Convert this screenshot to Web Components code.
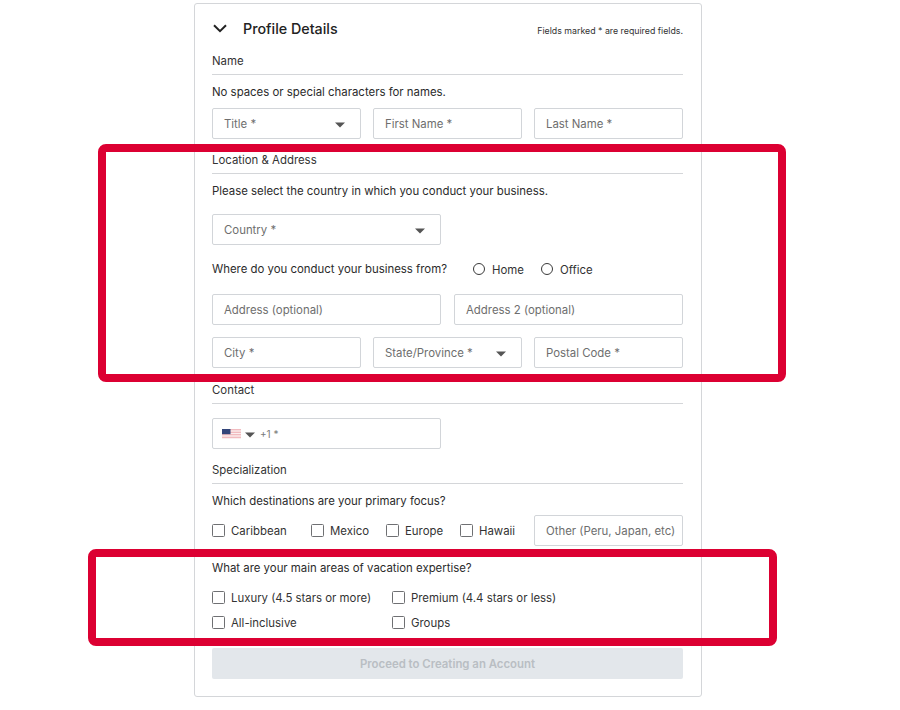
<!DOCTYPE html>
<html lang="en">
<head>
<meta charset="utf-8">
<title>Profile Details</title>
<style>
  body { margin: 0; background: #fff; font-family: "Inter", "Liberation Sans", sans-serif; color: #333; }
</style>
</head>
<body>
<profile-form></profile-form>
<highlight-box style="left:98px;top:144px;width:688px;height:238px"></highlight-box>
<highlight-box style="left:88px;top:549px;width:689px;height:97px"></highlight-box>

<script>
const CARET = `<svg width="10" height="6" viewBox="0 0 10 6"><path d="M0 0.5h10L5 5.5z" fill="#555"/></svg>`;

class SectionHead extends HTMLElement {
  constructor() {
    super();
    this.attachShadow({ mode: "open" }).innerHTML = `
      <style>
        :host { display: block; height: 22px; border-bottom: 1px solid #d4d6d9; font-size: 11.4px; line-height: 19px; color: #333; }
      </style>
      <slot></slot>`;
  }
}

class FormText extends HTMLElement {
  constructor() {
    super();
    this.attachShadow({ mode: "open" }).innerHTML = `
      <style>
        :host { display: block; height: 18px; font-size: 11.4px; line-height: 19px; color: #2b2b2b; white-space: nowrap; }
      </style>
      <slot></slot>`;
  }
}

class TextField extends HTMLElement {
  constructor() {
    super();
    this.attachShadow({ mode: "open" }).innerHTML = `
      <style>
        :host { display: flex; align-items: center; justify-content: space-between; box-sizing: border-box; height: 31px; padding: 1px 11px 0; border: 1px solid #d2d5d9; border-radius: 2px; background: #fff; font-size: 11.4px; color: #6e6e6e; white-space: nowrap; }
      </style>
      <slot></slot>`;
  }
}

class SelectField extends HTMLElement {
  constructor() {
    super();
    this.attachShadow({ mode: "open" }).innerHTML = `
      <style>
        :host { display: flex; align-items: center; justify-content: space-between; box-sizing: border-box; height: 31px; padding: 1px 15px 0 11px; border: 1px solid #d2d5d9; border-radius: 2px; background: #fff; font-size: 11.4px; color: #6e6e6e; white-space: nowrap; }
        svg { display: block; margin-top: 1px; }
      </style>
      <slot></slot>${CARET}`;
  }
}

class PhoneField extends HTMLElement {
  constructor() {
    super();
    this.attachShadow({ mode: "open" }).innerHTML = `
      <style>
        :host { display: flex; align-items: center; box-sizing: border-box; height: 31px; padding: 0 9px; border: 1px solid #d2d5d9; border-radius: 2px; font-size: 10px; color: #7a7a7a; }
        .flag { display: block; margin-right: 4px; }
        .caret { display: block; margin-right: 5px; margin-top: 1px; }
      </style>
      <svg class="flag" width="19" height="10" viewBox="0 0 19 10">
        <rect width="19" height="10" fill="#fbeeee"/>
        <path d="M0 .75h19M0 3.25h19M0 5.75h19M0 8.25h19" stroke="#eeaab0" stroke-width="1.2"/>
        <rect width="8.5" height="5.2" fill="#34467a"/>
      </svg>
      <span class="caret">${CARET}</span>
      <slot></slot>`;
  }
}

class CheckOption extends HTMLElement {
  constructor() {
    super();
    this.attachShadow({ mode: "open" }).innerHTML = `
      <style>
        :host { display: flex; align-items: center; gap: 6px; height: 18px; font-size: 11.4px; color: #333; white-space: nowrap; }
        i { flex: none; box-sizing: border-box; width: 13px; height: 13px; border: 1px solid #6f7073; border-radius: 1.5px; }
        span { padding-top: 1px; }
      </style>
      <i></i><span><slot></slot></span>`;
  }
}

class RadioOption extends HTMLElement {
  constructor() {
    super();
    this.attachShadow({ mode: "open" }).innerHTML = `
      <style>
        :host { display: flex; align-items: center; gap: 7px; height: 18px; font-size: 11.4px; color: #333; white-space: nowrap; }
        i { flex: none; box-sizing: border-box; width: 12px; height: 12px; border: 1.4px solid #3a3a3a; border-radius: 50%; }
        span { padding-top: 1px; }
      </style>
      <i></i><span><slot></slot></span>`;
  }
}

class ProceedButton extends HTMLElement {
  constructor() {
    super();
    this.attachShadow({ mode: "open" }).innerHTML = `
      <style>
        :host { display: flex; align-items: center; justify-content: center; height: 31px; border-radius: 2px; background: #e3e7eb; color: #b9bec3; font-size: 11.4px; font-weight: 600; }
      </style>
      <slot></slot>`;
  }
}

// the red annotation frames lie over the form
class HighlightBox extends HTMLElement {
  constructor() {
    super();
    this.attachShadow({ mode: "open" }).innerHTML = `
      <style>
        :host { position: absolute; display: block; box-sizing: border-box; border: 8px solid #dc0032; border-radius: 8px; pointer-events: none; }
      </style>`;
  }
}

class ProfileForm extends HTMLElement {
  constructor() {
    super();
    this.attachShadow({ mode: "open" }).innerHTML = `
      <style>
        :host { display: block; box-sizing: border-box; width: 508px; margin: 3px 0 0 194px; padding: 13px 18px 17px 17px; border: 1px solid #d4d6d9; border-radius: 3px; background: #fff; font-family: "Inter", "Liberation Sans", sans-serif; }
        header { display: flex; align-items: center; height: 23px; margin-bottom: 12px; }
        header svg { display: block; margin-right: 16px; margin-left: 1px; }
        h1 { margin: 0; font-size: 14.3px; font-weight: 500; color: #222; }
        small { margin-left: auto; margin-top: 4px; font-size: 8.8px; color: #333; white-space: nowrap; }
        .row { display: grid; gap: 12px; }
        .three { grid-template-columns: repeat(3, 149px); }
        .two { grid-template-columns: repeat(2, 229px); gap: 13px; }
        .half { width: 229px; }
        .where { display: flex; align-items: center; }
        .where form-text { width: 261px; }
        .where radio-option { width: 68px; }
        .dest { display: grid; grid-template-columns: 99px 75px 74px 74px 149px; align-items: center; }
        .areas { display: grid; grid-template-columns: 180px 1fr; row-gap: 7px; }
      </style>
      <header>
        <svg width="14" height="9" viewBox="0 0 14 9"><path d="M1 1.2l6 6 6-6" fill="none" stroke="#222" stroke-width="2"/></svg>
        <h1>Profile Details</h1>
        <small>Fields marked * are required fields.</small>
      </header>

      <section-head>Name</section-head>
      <form-text style="margin-top:8px">No spaces or special characters for names.</form-text>
      <div class="row three" style="margin-top:7px">
        <select-field>Title *</select-field>
        <text-field>First Name *</text-field>
        <text-field>Last Name *</text-field>
      </div>

      <section-head style="margin-top:12px">Location &amp; Address</section-head>
      <form-text style="margin-top:8px">Please select the country in which you conduct your business.</form-text>
      <select-field class="half" style="margin-top:14px">Country *</select-field>
      <div class="where" style="margin-top:15px">
        <form-text>Where do you conduct your business from?</form-text>
        <radio-option>Home</radio-option>
        <radio-option>Office</radio-option>
      </div>
      <div class="row two" style="margin-top:16px">
        <text-field>Address (optional)</text-field>
        <text-field>Address 2 (optional)</text-field>
      </div>
      <div class="row three" style="margin-top:12px">
        <text-field>City *</text-field>
        <select-field>State/Province *</select-field>
        <text-field>Postal Code *</text-field>
      </div>

      <section-head style="margin-top:13px">Contact</section-head>
      <phone-field class="half" style="margin-top:14px">+1 *</phone-field>

      <section-head style="margin-top:12px">Specialization</section-head>
      <form-text style="margin-top:8px">Which destinations are your primary focus?</form-text>
      <div class="dest" style="margin-top:5px">
        <check-option>Caribbean</check-option>
        <check-option>Mexico</check-option>
        <check-option>Europe</check-option>
        <check-option>Hawaii</check-option>
        <text-field>Other (Peru, Japan, etc)</text-field>
      </div>

      <form-text style="margin-top:13px">What are your main areas of vacation expertise?</form-text>
      <div class="areas" style="margin-top:11px">
        <check-option>Luxury (4.5 stars or more)</check-option>
        <check-option>Premium (4.4 stars or less)</check-option>
        <check-option>All-inclusive</check-option>
        <check-option>Groups</check-option>
      </div>

      <proceed-button style="margin-top:17px">Proceed to Creating an Account</proceed-button>`;
  }
}

customElements.define("section-head", SectionHead);
customElements.define("form-text", FormText);
customElements.define("text-field", TextField);
customElements.define("select-field", SelectField);
customElements.define("phone-field", PhoneField);
customElements.define("check-option", CheckOption);
customElements.define("radio-option", RadioOption);
customElements.define("proceed-button", ProceedButton);
customElements.define("highlight-box", HighlightBox);
customElements.define("profile-form", ProfileForm);
</script>
</body>
</html>
